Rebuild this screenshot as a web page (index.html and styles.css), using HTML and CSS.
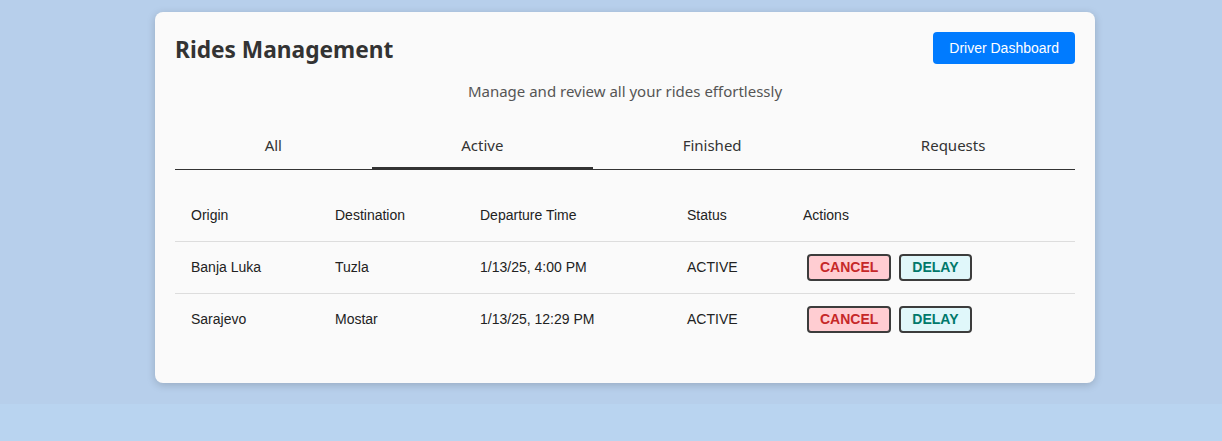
FILE: index.html
```html
<!DOCTYPE html>
<html lang="en">
<head>
<meta charset="utf-8">
<title>Rides Management</title>
<link rel="stylesheet" href="styles.css">
</head>
<body>
<div class="page">
  <div class="card">
    <div class="card-header">
      <h1 class="title">Rides Management</h1>
      <button class="btn-primary">Driver Dashboard</button>
    </div>
    <p class="subtitle">Manage and review all your rides effortlessly</p>
    <div class="tabs">
      <div class="tab">All</div>
      <div class="tab active">Active</div>
      <div class="tab">Finished</div>
      <div class="tab">Requests</div>
    </div>
    <table class="rides">
      <thead>
        <tr>
          <th class="c-origin">Origin</th>
          <th class="c-dest">Destination</th>
          <th class="c-time">Departure Time</th>
          <th class="c-status">Status</th>
          <th class="c-actions">Actions</th>
        </tr>
      </thead>
      <tbody>
        <tr>
          <td>Banja Luka</td>
          <td>Tuzla</td>
          <td>1/13/25, 4:00 PM</td>
          <td>ACTIVE</td>
          <td><button class="act cancel">CANCEL</button><button class="act delay">DELAY</button></td>
        </tr>
        <tr>
          <td>Sarajevo</td>
          <td>Mostar</td>
          <td>1/13/25, 12:29 PM</td>
          <td>ACTIVE</td>
          <td><button class="act cancel">CANCEL</button><button class="act delay">DELAY</button></td>
        </tr>
      </tbody>
    </table>
  </div>
</div>
</body>
</html>
```

FILE: styles.css
```css
html, body {
  margin: 0;
  padding: 0;
}
body {
  background: #b9d4f0;
  font-family: "Noto Sans", "Open Sans", sans-serif;
  color: #333;
}
.page {
  background: #b7cfeb;
  padding: 12px 0 21px 155px;
  display: flex;
}
.card {
  width: 900px;
  padding: 20px;
  background: #fafafa;
  border-radius: 8px;
  box-shadow: 0 2px 8px rgba(0, 0, 0, 0.18);
}
.card-header {
  display: flex;
  justify-content: space-between;
  align-items: center;
  height: 32px;
}
.title {
  margin: 0;
  font-size: 22.7px;
  font-weight: 700;
  color: #333;
  line-height: 32px;
  padding-top: 3px;
}
.btn-primary {
  font-family: "Liberation Sans", Arial, sans-serif;
  font-size: 14px;
  line-height: 18px;
  height: 32px;
  padding: 0 16px;
  background: #007bff;
  color: #fff;
  border: none;
  border-radius: 4px;
}
.subtitle {
  margin: 16px 0 0;
  text-align: center;
  font-size: 15px;
  line-height: 22px;
  color: #555;
}
.tabs {
  display: flex;
  margin-top: 19px;
  border-bottom: 1px solid #333;
}
.tab {
  flex: 1 1 auto;
  text-align: center;
  font-size: 15px;
  line-height: 48px;
  height: 48px;
  color: #333;
  position: relative;
}
.tab.active::after {
  content: "";
  position: absolute;
  left: 0;
  right: 0;
  bottom: -1px;
  height: 3px;
  background: #333;
}
.rides {
  width: 900px;
  margin: 19px 0 18px;
  border-collapse: collapse;
  font-family: "Liberation Sans", Arial, sans-serif;
  font-size: 14px;
  color: #222;
}
.rides th, .rides td {
  height: 52px;
  padding: 0 16px;
  text-align: left;
  font-weight: 400;
  vertical-align: middle;
  box-sizing: border-box;
}
.rides thead tr, .rides tbody tr:not(:last-child) {
  border-bottom: 1px solid #ddd;
}
.c-origin { width: 144px; }
.c-dest { width: 145px; }
.c-time { width: 207px; }
.c-status { width: 116px; }
.act {
  font-family: "Liberation Sans", Arial, sans-serif;
  font-size: 14px;
  font-weight: 700;
  line-height: 17px;
  padding: 3px 11px;
  margin: 0 4px;
  border: 2px solid #3c3c3c;
  border-radius: 4px;
}
.cancel {
  background: #ffcdd2;
  color: #c62828;
}
.delay {
  background: #e0f7fa;
  color: #00796b;
}
```
